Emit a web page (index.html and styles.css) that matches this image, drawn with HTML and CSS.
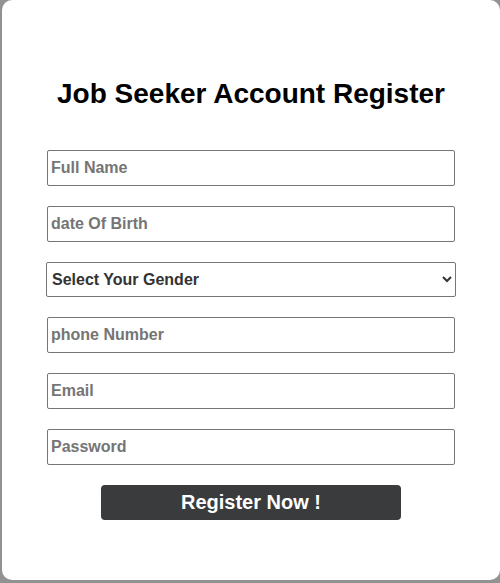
FILE: index.html
```html
<!DOCTYPE html>
<html lang="en">
<head>
<meta charset="utf-8">
<title>Job Seeker Account Register</title>
<link rel="stylesheet" href="styles.css">
</head>
<body>
<div class="card">
  <h1 class="title">Job Seeker Account Register</h1>
  <form class="form">
    <input class="field" type="text" placeholder="Full Name">
    <input class="field" type="text" placeholder="date Of Birth">
    <select class="field select">
      <option>Select Your Gender</option>
      <option>Male</option>
      <option>Female</option>
    </select>
    <input class="field" type="text" placeholder="phone Number">
    <input class="field" type="email" placeholder="Email">
    <input class="field" type="password" placeholder="Password">
    <button class="btn" type="button">Register Now !</button>
  </form>
</div>
</body>
</html>
```
FILE: styles.css
```css
html, body {
  margin: 0;
  padding: 0;
}
body {
  background: #929292;
  font-family: "Liberation Sans", Arial, sans-serif;
  height: 583px;
  overflow: hidden;
}
.card {
  box-sizing: border-box;
  margin: 0 0 0 2px;
  width: 498px;
  height: 580px;
  background: #ffffff;
  border-radius: 10px;
  padding-top: 77px;
}
.title {
  margin: 0 0 39px 0;
  text-align: center;
  font-size: 28px;
  font-weight: 700;
  color: #000;
  line-height: 34px;
}
.form {
  display: flex;
  flex-direction: column;
  align-items: center;
  gap: 20px;
}
.field {
  box-sizing: border-box;
  width: 408px;
  height: 36px;
  margin: 0;
  border: 1px solid #767676;
  border-radius: 2px;
  padding: 0 3px;
  font-family: "Liberation Sans", Arial, sans-serif;
  font-size: 16px;
  font-weight: 700;
  color: #333;
  background: #fff;
}
.field::placeholder {
  color: #757575;
  opacity: 1;
}
.select {
  width: 410px;
  height: 35px;
  padding: 0 1px;
  color: #333;
}
.btn {
  box-sizing: border-box;
  width: 300px;
  height: 35px;
  margin: 0;
  border: none;
  border-radius: 4px;
  background: #3a3b3d;
  color: #fff;
  font-family: "Liberation Sans", Arial, sans-serif;
  font-size: 20px;
  font-weight: 700;
  cursor: pointer;
}
```
